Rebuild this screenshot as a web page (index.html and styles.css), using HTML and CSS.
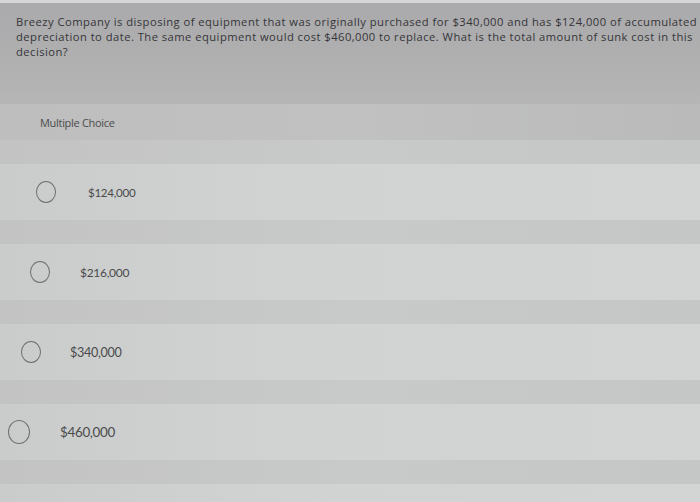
FILE: index.html
```html
<!DOCTYPE html>
<html>
<head>
<meta charset="utf-8">
<link rel="stylesheet" href="styles.css">
</head>
<body>
<div class="page">
  <div class="top-strip"></div>
  <section class="question">
    <p class="q-text">Breezy Company is disposing of equipment that was originally purchased for $340,000 and has $124,000 of accumulated<br>depreciation to date. The same equipment would cost $460,000 to replace. What is the total amount of sunk cost in this<br>decision?</p>
  </section>
  <div class="mc-header"><span class="mc-label">Multiple Choice</span></div>
  <div class="strip"></div>
  <div class="option opt-1"><span class="radio"></span><span class="opt-text">$124,000</span></div>
  <div class="strip"></div>
  <div class="option opt-2"><span class="radio"></span><span class="opt-text">$216,000</span></div>
  <div class="strip"></div>
  <div class="option opt-3"><span class="radio"></span><span class="opt-text">$340,000</span></div>
  <div class="strip"></div>
  <div class="option opt-4"><span class="radio"></span><span class="opt-text">$460,000</span></div>
  <div class="strip"></div>
  <div class="option tail"></div>
</div>
</body>
</html>
```

FILE: styles.css
```css
html, body {
  margin: 0;
  padding: 0;
}
body {
  width: 700px;
  height: 502px;
  overflow: hidden;
  background: #cfd1d0;
  font-family: Lato, "Open Sans", sans-serif;
}
.page {
  display: flex;
  flex-direction: column;
}
.top-strip {
  height: 3px;
  background: #d6d6d6;
}
.question {
  height: 101px;
  background: linear-gradient(180deg, #aaaaac 0%, #b0b0b1 60%, #b6b6b7 100%);
  padding: 11px 0 0 16px;
  box-sizing: border-box;
}
.q-text {
  margin: 0;
  font-family: "Open Sans", Lato, sans-serif;
  font-size: 11.2px;
  line-height: 15px;
  letter-spacing: 0.47px;
  color: #353538;
  white-space: nowrap;
}
.mc-header {
  height: 36px;
  background: linear-gradient(90deg, #bdbebd 0%, #c0c1c0 50%, #bababb 100%);
  display: flex;
  align-items: center;
  padding-left: 40px;
  box-sizing: border-box;
}
.mc-label {
  font-family: "Open Sans", Lato, sans-serif;
  font-size: 11px;
  color: #4d4d4f;
  letter-spacing: -0.3px;
}
.strip {
  height: 24px;
  background: linear-gradient(90deg, #c2c3c2 0%, #c8cac9 50%, #c5c7c6 100%);
}
.option {
  height: 56px;
  display: flex;
  align-items: center;
  gap: 33px;
  background: linear-gradient(90deg, #cacccb 0%, #d1d3d2 40%, #d3d5d4 100%);
  box-sizing: border-box;
}
.option.tail {
  height: 40px;
}
.radio {
  width: 20px;
  height: 22px;
  border: 1.5px solid #6f6f70;
  border-radius: 50%;
  box-sizing: border-box;
  flex: none;
}
.opt-text {
  color: #4a4a4c;
  letter-spacing: -0.3px;
}
.opt-1 { padding-left: 36px; gap: 32px; }
.opt-1 .opt-text { font-size: 11.6px; }
.opt-2 { padding-left: 30px; gap: 30px; }
.opt-2 .opt-text { font-size: 12px; }
.opt-3 { padding-left: 21px; gap: 29px; }
.opt-3 .opt-text { font-size: 12.6px; }
.opt-4 { padding-left: 8px; gap: 30px; }
.opt-4 .radio { width: 22px; height: 24px; }
.opt-4 .opt-text { font-size: 13.4px; }
```
